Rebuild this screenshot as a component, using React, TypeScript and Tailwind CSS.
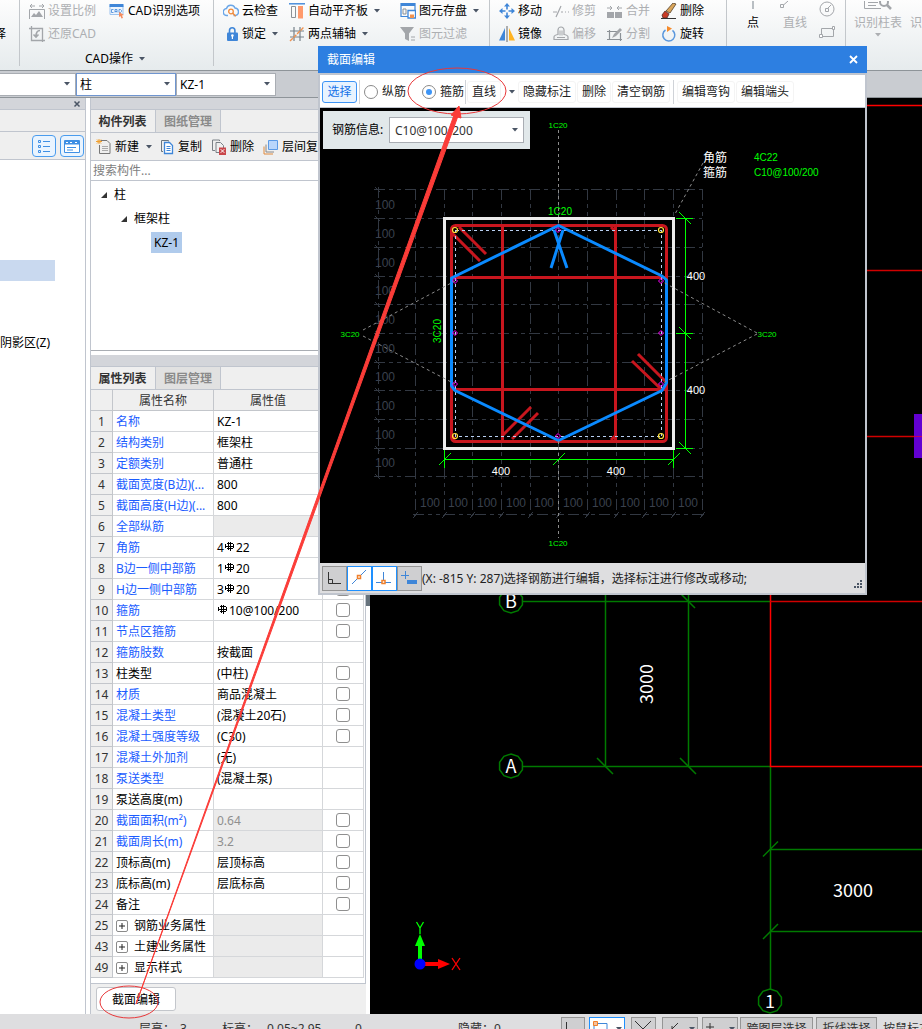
import { useState, type ReactNode } from 'react';

const GRAY = '#a3a6aa';
const BLUE = '#3f86d8';

const Icon = ({ children }: { children: ReactNode }) => (
  <svg width="16" height="16" viewBox="0 0 16 16" fill="none" className="shrink-0">{children}</svg>
);

const Caret = ({ className = 'text-gray-600' }: { className?: string }) => (
  <svg width="6" height="4" viewBox="0 0 6 4" className={`shrink-0 ${className}`}><path d="M0 0h6L3 3.500z" fill="currentColor" /></svg>
);

const icons = {
  scale: <Icon><path d="M1 3h5M3 1L1 3l2 2M15 3h-5M13 1l2 2-2 2M.5 6.500h15v10H.5z" stroke={GRAY} /><path d="M2 14l3-4 2 2 3-4 4 6z" fill={GRAY} /></Icon>,
  restore: <Icon><path d="M2.500 0v14.500H16M0 2.500h13.500V16" stroke={GRAY} strokeWidth="1.300" /><path d="M11 4.500c-3 0-4 2-4 6M4.500 8.500L7 11l2.500-2.500" stroke={GRAY} strokeWidth="1.600" /></Icon>,
  cadOptions: <Icon><path d="M1 2.500h13v9H1z" fill="#eef5fd" stroke="#9cc3ee" /><path d="M.5 1h14v3H.5z" fill={BLUE} /><path d="M4.500 6.500h-2v3h2M6 9.500v-3h2v3M6 8.500h2M10 6.500h1.500l1 1v1l-1 1H10z" stroke={BLUE} strokeWidth=".8" /><path d="M10 9l5 3-2 .5 1 2.500-1.500.5-1-2.500-1.500 1z" fill="#f58b5c" /></Icon>,
  cloud: <Icon><path d="M5 12.500H4a3.500 3.500 0 01-.5-7 4.500 4.500 0 018.500-.5 3.800 3.800 0 01.5 7.500h-2" stroke="#6aa6e8" strokeWidth="1.400" /><circle cx="8" cy="8.500" r="2.300" stroke="#f08b3c" strokeWidth="1.300" /><path d="M9.700 10.200l3 3" stroke="#f08b3c" strokeWidth="1.500" /></Icon>,
  lock: <Icon><path d="M6.500 7V4.500a2.700 2.700 0 015.400 0V7" stroke={BLUE} strokeWidth="1.600" /><rect x="4" y="6.500" width="11" height="8.500" rx="1" fill={BLUE} /><circle cx="9.400" cy="9.500" r="1.300" fill="#fff" /><path d="M9.400 10v3" stroke="#fff" strokeWidth="1.200" /></Icon>,
  align: <Icon><path d="M0 .8h16" stroke={BLUE} strokeWidth="1.400" /><path d="M2.500 3.500h4v11h-4z" stroke="#8b9196" /><path d="M9 3h5v12.500H9z" fill="#ff9a6c" /></Icon>,
  axis: <Icon><path d="M5 1v14M11 1v14M1 5h14M1 11h14" stroke="#76818a" strokeWidth="1.200" /><path d="M1 15L15 1" stroke="#f0924f" strokeWidth="1.400" strokeDasharray="4 1" /></Icon>,
  save: <Icon><path d="M1 .500h14v13H1z" stroke={BLUE} strokeWidth="1.200" /><path d="M1 0h14v3H1z" fill={BLUE} /><path d="M3 6h3v5H3z" stroke="#8b9196" /><path d="M8 7.500h7.500V15H8z" fill="#fff" stroke={BLUE} strokeWidth="1.300" /><path d="M10 11.500h4V15h-4z" fill="#f0924f" /></Icon>,
  filter: <Icon><path d="M0 1h14L9 7.500V15l-4-2V7.500z" fill="#a3a6aa" /><path d="M11 11h4M11 14h4" stroke={GRAY} /></Icon>,
  move: <Icon><path d="M8 0l3 3.500H5zM8 16l3-3.500H5zM0 8l3.500-3v6zM16 8l-3.500-3v6z" fill={BLUE} /><path d="M8 2v4.500M8 9.500V14M2 8h4.500M9.500 8H14" stroke={BLUE} strokeWidth="1.600" /></Icon>,
  mirror: <Icon><path d="M6 2v12.500H0z" fill="#3f86d8" /><path d="M10 2v12.500h6z" fill="#ffb321" /><path d="M8 0v16" stroke="#666" /></Icon>,
  trim: <Icon><path d="M0 9h4M8 9h2M12 9h1M15 9h1M3 14L8 3" stroke={GRAY} strokeWidth="1.200" /></Icon>,
  offset: <Icon><path d="M1 13.500h14V11c0-1-1-2-4-2.500V4a3 3 0 00-6 0v4.500C2 9 1 10 1 11z" stroke={GRAY} strokeWidth="1.200" /><path d="M4 11.500h8M7 4.500v5M9 4.500v5" stroke={GRAY} /></Icon>,
  merge: <Icon><path d="M0 9h7v6H0zM8 9h7v6H8z" fill="#a3a6aa" /><path d="M0 5h5M3 3l2 2-2 2M15 5h-5M12 3l-2 2 2 2" stroke={GRAY} /></Icon>,
  split: <Icon><path d="M0 5.500h11M2.500 4v10M0 13.500h15M13.500 7v8" stroke="#8b9196" strokeWidth="1.200" /><path d="M5 12l2-4 6-6 2 2-6 6z" fill="#a3a6aa" /></Icon>,
  erase: <Icon><path d="M12 0l3 1-6 9-4-2z" fill="#d9a55a" stroke="#54402a" strokeWidth=".8" /><path d="M4 8l4 3-2 4H2l-1-3z" fill="#c93c26" stroke="#54302a" strokeWidth=".8" /><path d="M0 15.500h15" stroke="#333" /></Icon>,
  rotate: <Icon><path d="M11.500 4.300A6 6 0 114.500 4" stroke="#5a97dd" strokeWidth="1.500" /><path d="M6 0l5 2.500L6 6z" fill="#f58b2c" /></Icon>,
  add: <Icon><path d="M4.500 1.500h6.500l3 3v10H3.500V6" stroke="#777" /><path d="M6 7.500h6M6 9.500h6M6 11.500h6" stroke="#aaa" /><path d="M1 .5l4 4M5 .5l-4 4M3 0v5M0 2.500h6" stroke="#f0a030" /></Icon>,
  copy: <Icon><path d="M9.500 2.500V1.500H2.500v11H4" stroke="#6b7680" /><path d="M5.500 3.500h5l3 3v8h-8z" fill="#fff" stroke={BLUE} strokeWidth="1.300" /><path d="M7.500 7.500h4M7.500 9.500h4M7.500 11.500h4" stroke={BLUE} /></Icon>,
  remove: <Icon><path d="M8.500 2V1H1.500v10.500H4M5 3.500h4.500l3 3V10M5 3.500v10h3" stroke="#7a8086" /><path d="M8 8.500h7V16H8z" fill="#c9474b" /><path d="M9.700 10.200l3.600 3.600M13.300 10.200l-3.600 3.600" stroke="#fff" /></Icon>,
  floors: <Icon><path d="M5.500 1.500h9v9h-9z" fill="#b9d6fb" stroke="#5b9ae6" /><path d="M3 5.500v7.500h8" stroke="#888" /><path d="M1 7.500V15h9" stroke="#e08a3c" /></Icon>,
};

type Cmd = { label: string; icon: ReactNode; off?: boolean; menu?: boolean };

const commandColumns: Record<string, { width: string; items: Cmd[] }[]> = {
  cad: [
    { width: 'w-20', items: [{ label: '设置比例', icon: icons.scale, off: true }, { label: '还原CAD', icon: icons.restore, off: true }] },
    { width: 'w-[104px]', items: [{ label: 'CAD识别选项', icon: icons.cadOptions }] },
  ],
  common: [
    { width: 'w-[66px]', items: [{ label: '云检查', icon: icons.cloud }, { label: '锁定', icon: icons.lock, menu: true }] },
    { width: 'w-[111px]', items: [{ label: '自动平齐板', icon: icons.align, menu: true }, { label: '两点辅轴', icon: icons.axis, menu: true }] },
    { width: 'w-[88px]', items: [{ label: '图元存盘', icon: icons.save, menu: true }, { label: '图元过滤', icon: icons.filter, off: true }] },
  ],
  edit: [
    { width: 'w-[54px]', items: [{ label: '移动', icon: icons.move }, { label: '镜像', icon: icons.mirror }] },
    { width: 'w-[54px]', items: [{ label: '修剪', icon: icons.trim, off: true }, { label: '偏移', icon: icons.offset, off: true }] },
    { width: 'w-[54px]', items: [{ label: '合并', icon: icons.merge, off: true }, { label: '分割', icon: icons.split, off: true }] },
    { width: 'w-16', items: [{ label: '删除', icon: icons.erase }, { label: '旋转', icon: icons.rotate }] },
  ],
};

function CommandGroup({ name }: { name: string }) {
  return (
    <div className="flex pt-px">
      {commandColumns[name].map((col, i) => (
        <div key={i} className={`flex shrink-0 flex-col gap-px ${col.width}`}>
          {col.items.map((c, row) => (
            <button key={c.label} disabled={c.off} className={`flex items-center gap-[3px] whitespace-nowrap ${row === 0 ? 'h-5' : 'h-6'} ${c.off ? 'text-[#adafb2]' : 'text-black'}`}>
              {c.icon}
              {c.label}
              {c.menu && <span className="pl-[3px]"><Caret /></span>}
            </button>
          ))}
        </div>
      ))}
    </div>
  );
}

const Divider = () => <div className="mb-1 w-px shrink-0 bg-[#c3c7cb]" />;

function Ribbon() {
  return (
    <header className="flex h-[71px] shrink-0 overflow-hidden border-b border-[#8e9499] bg-gradient-to-b from-[#fdfdfd] to-[#e6ebed]">
      <div className="flex w-[19px] shrink-0 pt-[22px]">
        <button className="flex h-6 w-1.5 items-center justify-end overflow-hidden whitespace-nowrap">选择</button>
      </div>
      <Divider />
      <div className="flex w-[193px] shrink-0 flex-col gap-px pl-[9px]">
        <CommandGroup name="cad" />
        <button className="flex h-6 items-center justify-center gap-1.5 pr-3">CAD操作 <Caret /></button>
      </div>
      <Divider />
      <div className="w-[275px] shrink-0 pl-[9px]"><CommandGroup name="common" /></div>
      <Divider />
      <div className="w-[236px] shrink-0 pl-[9px]"><CommandGroup name="edit" /></div>
      <Divider />
      <div className="flex w-[118px] shrink-0 pt-px">
        <button className="flex w-[52px] flex-col items-center">
          <svg width="16" height="12" className="shrink-0"><path d="M8 0v8" stroke="#76818a" /></svg>
          <span className="leading-5">点</span>
        </button>
        <button disabled className="flex w-8 flex-col items-center text-[#adafb2]">
          <svg width="32" height="12" className="shrink-0" fill="none"><path d="M1.500 3.500h3v3h-3zM4.500 4L9 0" stroke={GRAY} /></svg>
          <span className="leading-5">直线</span>
        </button>
        <div className="flex flex-col gap-2 pl-2">
          <button disabled aria-label="圆"><svg width="16" height="16" fill="none"><circle cx="8" cy="8" r="7" stroke={GRAY} /><path d="M6.500 7.500h3v3h-3zM9 7l3-3" stroke={GRAY} /></svg></button>
          <button disabled aria-label="矩形"><svg width="16" height="14" fill="none"><path d="M2.500 3.500h12v8h-12z" stroke={GRAY} /><path d="M.5 9.500h3v3h-3zM13.500 1.500h2v3h-2z" fill="#fff" stroke={GRAY} /></svg></button>
        </div>
      </div>
      <Divider />
      <div className="flex gap-2 pl-2 pt-px text-[#adafb2]">
        <button disabled className="flex shrink-0 flex-col items-center whitespace-nowrap">
          <svg width="32" height="12" className="shrink-0" fill="none"><path d="M2.500 0v7.500H19M6 1.500h10M6 4.500h8" stroke={GRAY} /><circle cx="22" cy="1" r="4" stroke={GRAY} strokeWidth="2" /><path d="M25 4l4 4" stroke={GRAY} strokeWidth="2.500" /></svg>
          <span className="leading-5">识别柱表</span>
          <Caret className="text-[#adafb2]" />
        </button>
        <button disabled className="flex shrink-0 flex-col whitespace-nowrap pt-3 leading-5">识别梁</button>
      </div>
    </header>
  );
}

function Combo({ label, value, className }: { label: string; value: string; className: string }) {
  return (
    <div className={`relative shrink-0 border bg-white ${className}`}>
      <select aria-label={label} className="h-full w-full appearance-none bg-transparent px-[3px] pt-px outline-none">
        <option>{value}</option>
      </select>
      <span className="pointer-events-none absolute inset-y-0 right-[5px] flex items-center"><Caret /></span>
    </div>
  );
}

function NavPanel() {
  return (
    <aside className="w-[86px] shrink-0 overflow-hidden border-r border-[#c0c5ce] bg-white">
      <div className="flex h-3 items-center justify-end border-b border-[#c0c5ce] bg-[#d3d5da] pr-1">
        <button aria-label="关闭"><svg width="8" height="8" className="text-gray-600"><path d="M1.500 1.500l5 5M6.500 1.500l-5 5" stroke="currentColor" strokeWidth="1.500" /></svg></button>
      </div>
      <div className="h-[22px] border-b border-[#c0c5ce] bg-[#efefef]" />
      <div className="flex h-7 items-center justify-end gap-1 border-b border-[#c0c5ce] bg-[#efefef] pr-px">
        <button aria-label="列表" className="flex h-[22px] w-6 items-center justify-center rounded border border-[#4a9cee] bg-[#e9f4ff]">
          <svg width="14" height="14" fill="none" stroke="#3f8fe4"><path d="M1.500 1.500h2v2h-2zM1.500 6.500h2v2h-2zM1.500 11.500h2v2h-2zM6 2.500h7M6 7.500h7M6 12.500h7" /></svg>
        </button>
        <button aria-label="面板" className="flex h-[22px] w-6 items-center justify-center rounded border border-[#4a9cee] bg-[#e9f4ff]">
          <svg width="16" height="14" fill="none" stroke="#3f8fe4"><path d="M.5 1.500h15v12H.5z" fill="#fff" /><path d="M1 3.500h14" strokeWidth="4" /><path d="M3 8.500h9M3 11h6" /><path d="M2 3.500h2M6 3.500h2M11 3.500h2" stroke="#fff" /></svg>
        </button>
      </div>
      <div className="pt-[100px]">
        <div className="h-[21px] w-[55px] bg-[#c9d9ef]" />
        <div className="mt-[52px] whitespace-nowrap leading-5">阴影区(Z)</div>
      </div>
    </aside>
  );
}

function Tabs({ items }: { items: [string, string] }) {
  return (
    <div className="flex h-[23px] shrink-0 border-b border-[#c0c5ce] bg-[#efefef]">
      <button className="w-[65px] border-r border-[#c0c5ce] pr-px pt-px font-bold text-[#333]">{items[0]}</button>
      <button className="w-[65px] border-r border-[#c0c5ce] bg-[#e1e1e1] pt-px font-bold text-[#8a8a8a]">{items[1]}</button>
    </div>
  );
}

const TreeArrow = () => <svg width="6" height="6" className="shrink-0"><path d="M6 0v6H0z" fill="#333" /></svg>;

function ComponentList() {
  return (
    <section className="shrink-0">
      <div className="h-3 border-b border-[#c0c5ce] bg-[#d3d5da]" />
      <Tabs items={['构件列表', '图纸管理']} />
      <div className="flex h-7 items-center overflow-hidden whitespace-nowrap border-b border-[#c0c5ce] bg-[#efefef] pl-[5px] pt-px">
        <button className="flex w-[63px] shrink-0 items-center gap-[3px]">{icons.add}新建<span className="pl-1"><Caret /></span></button>
        <button className="flex w-[52px] shrink-0 items-center gap-[3px]">{icons.copy}复制</button>
        <button className="flex w-[52px] shrink-0 items-center gap-[3px]">{icons.remove}删除</button>
        <button className="flex shrink-0 items-center gap-[3px]">{icons.floors}层间复制</button>
      </div>
      <input aria-label="搜索构件" placeholder="搜索构件..." className="block h-5 w-full border-b border-[#c0c5ce] bg-white px-0.5 outline-none placeholder:text-[#808080]" />
      <ul className="h-[170px] border-b border-[#a9adb3] bg-white pt-0.5">
        <li className="flex h-6 items-center gap-[7px] pl-2.5"><TreeArrow />柱</li>
        <li className="flex h-6 items-center gap-[7px] pl-[30px]"><TreeArrow />框架柱</li>
        <li className="flex h-[23px] items-center pl-[60px]"><span className="bg-[#b0cbec] px-[3px] leading-[21px]">KZ-1</span></li>
      </ul>
    </section>
  );
}

// HRB400 bar grade mark
const Grade = () => (
  <svg width="10" height="10" fill="none" stroke="#000" className="mx-px inline-block align-baseline" shapeRendering="crispEdges">
    <path d="M2 1.500h6M2 6.500h6M.5 2v4M8.500 2v4M0 4.500h9M3.500 0v8M5.500 0v9" strokeWidth="1" />
  </svg>
);

type Row = { no: number; name: string; value?: ReactNode; plain?: boolean; shaded?: boolean; check?: boolean; group?: boolean };

const rows: Row[] = [
  { no: 1, name: '名称', value: 'KZ-1' },
  { no: 2, name: '结构类别', value: '框架柱', check: true },
  { no: 3, name: '定额类别', value: '普通柱', check: true },
  { no: 4, name: '截面宽度(B边)(...', value: '800', check: true },
  { no: 5, name: '截面高度(H边)(...', value: '800', check: true },
  { no: 6, name: '全部纵筋', shaded: true, check: true },
  { no: 7, name: '角筋', value: <>4<Grade />22</>, check: true },
  { no: 8, name: 'B边一侧中部筋', value: <>1<Grade />20</>, check: true },
  { no: 9, name: 'H边一侧中部筋', value: <>3<Grade />20</>, check: true },
  { no: 10, name: '箍筋', value: <><Grade />10@100/200</>, check: true },
  { no: 11, name: '节点区箍筋', check: true },
  { no: 12, name: '箍筋肢数', value: '按截面' },
  { no: 13, name: '柱类型', value: '(中柱)', plain: true, check: true },
  { no: 14, name: '材质', value: '商品混凝土', check: true },
  { no: 15, name: '混凝土类型', value: '(混凝土20石)', check: true },
  { no: 16, name: '混凝土强度等级', value: '(C30)', check: true },
  { no: 17, name: '混凝土外加剂', value: '(无)' },
  { no: 18, name: '泵送类型', value: '(混凝土泵)' },
  { no: 19, name: '泵送高度(m)', plain: true },
  { no: 20, name: '截面面积(m²)', value: '0.64', shaded: true, check: true },
  { no: 21, name: '截面周长(m)', value: '3.2', shaded: true, check: true },
  { no: 22, name: '顶标高(m)', value: '层顶标高', plain: true, check: true },
  { no: 23, name: '底标高(m)', value: '层底标高', plain: true, check: true },
  { no: 24, name: '备注', plain: true, check: true },
  { no: 25, name: '钢筋业务属性', plain: true, shaded: true, group: true },
  { no: 43, name: '土建业务属性', plain: true, shaded: true, group: true },
  { no: 49, name: '显示样式', plain: true, shaded: true, group: true },
];

function PropertyList() {
  return (
    <section className="mt-1 flex min-h-0 flex-1 flex-col bg-[#efefef]">
      <div className="h-3 shrink-0 border-b border-[#c0c5ce] bg-[#d3d5da]" />
      <Tabs items={['属性列表', '图层管理']} />
      <div className="border-b border-r border-[#c0c5ce] bg-white pb-[5px]">
        <table className="w-[273px] table-fixed border-separate border-spacing-0 leading-[18px]">
          <colgroup><col className="w-[22px]" /><col className="w-[101px]" /><col className="w-[109px]" /><col className="w-[41px]" /></colgroup>
          <thead>
            <tr className="h-[21px] bg-[#efefef] text-[#333]">
              <th className="border-b border-r border-[#c3c6cb] p-0" />
              <th className="border-b border-r border-[#c3c6cb] p-0 pt-0.5 font-normal">属性名称</th>
              <th className="border-b border-r border-[#c3c6cb] p-0 pt-0.5 font-normal">属性值</th>
              <th className="border-b border-r border-[#c3c6cb] p-0" />
            </tr>
          </thead>
          <tbody>
            {rows.map(r => (
              <tr key={r.no} className="h-[21px]">
                <td className="border-b border-r border-[#c3c6cb] bg-[#efefef] p-0 pt-0.5 text-center text-[#333]">{r.no}</td>
                <td className={`whitespace-nowrap border-b border-r border-[#d5d7da] p-0 pl-[3px] pt-0.5 ${r.plain ? 'text-black' : 'text-[#1a5cff]'}`}>
                  {r.group ? (
                    <span className="flex items-center gap-1.5">
                      <button aria-label={`展开${r.name}`} className="flex size-3 items-center justify-center rounded-[2px] border border-[#8a8a8a] bg-white">
                        <svg width="6" height="6"><path d="M3 0v6M0 3h6" stroke="#222" /></svg>
                      </button>
                      {r.name}
                    </span>
                  ) : r.name}
                </td>
                <td className={`whitespace-nowrap border-b border-r border-[#d5d7da] p-0 pl-[3px] pt-0.5 ${r.shaded ? 'bg-[#ebebeb] text-[#8f8f8f]' : 'text-black'}`}>{r.value}</td>
                <td className="border-b border-r border-[#d5d7da] p-0">
                  {r.check && <input type="checkbox" aria-label={`附加 ${r.name}`} className="mx-auto block size-3.5 appearance-none rounded-[3px] border border-[#8f8f8f] bg-white checked:bg-blue-500" />}
                </td>
              </tr>
            ))}
          </tbody>
        </table>
      </div>
      <div className="pl-[5px] pt-[3px]">
        <button className="h-6 w-20 rounded-[3px] border border-[#c3c6cb] bg-white pt-px">截面编辑</button>
      </div>
    </section>
  );
}

const bubble = (cx: number, cy: number) =>
  Array.from({ length: 10 }, (_, i) => {
    const a = (i * Math.PI) / 5 - Math.PI / 2;
    return `${cx + 12 * Math.cos(a)},${cy + 12 * Math.sin(a)}`;
  }).join(' ');

function PlanView() {
  return (
    <main className="min-w-0 flex-1 overflow-hidden bg-black">
      <svg width="552" height="916" viewBox="370 98 552 916" fill="none" className="max-w-none">
        <g stroke="#007a00" strokeWidth="1.500">
          <path d="M523 601.500H770M523 766.500H770M605.500 560V766M688.500 560V766M770.500 766V990M770 849.500h152M770 931.500h152" />
          <path d="M597 758l16 16M680 758l16 16M681 594l14 14M763 856.500l15-15M763 939l15-15" />
          <polygon points={bubble(511, 601)} />
          <polygon points={bubble(511, 766)} />
          <polygon points={bubble(770, 1001)} />
        </g>
        <path d="M770.500 560V766.500H922" stroke="#f00" strokeWidth="1.500" />
        <path d="M770 601.500H922M860 436.500h62M860 270.500h62" stroke="#d00000" strokeWidth="1.500" />
        <path d="M860 105.500h62" stroke="#f00" strokeWidth="1.500" />
        <rect x="914" y="414" width="8" height="44" fill="#6200d2" />
        <path d="M914 436.500h8" stroke="#c00060" />
        <g fill="#fff" fontFamily="Noto Sans CJK SC, sans-serif" textAnchor="middle" fontSize="18">
          <text x="511" y="608">B</text>
          <text x="511" y="773">A</text>
          <text x="770" y="1008">1</text>
          <text x="853" y="897">3000</text>
          <text x="647" y="690" transform="rotate(-90 647 684)">3000</text>
        </g>
        <path d="M420 960v-18" stroke="#0f0" strokeWidth="4" />
        <path d="M415 946l5-12 5 12z" fill="#0f0" />
        <path d="M424 964h14" stroke="#f00" strokeWidth="4" />
        <path d="M438 959l12 5-12 5z" fill="#f00" />
        <circle cx="420" cy="964" r="5.500" fill="#00f" />
        <path d="M416.500 922l3.500 6 3.500-6M420 928v6" stroke="#0f0" strokeWidth="1.300" />
        <path d="M452 958l8 12M460 958l-8 12" stroke="#f00" strokeWidth="1.300" />
      </svg>
    </main>
  );
}

const gridX = [415, 444, 472, 501, 530, 558, 587, 616, 644, 673, 702];
const gridY = [189, 218, 247, 276, 304, 333, 362, 390, 419, 448, 476];
const sideBars = [[558, 230], [558, 436], [455, 281], [455, 333], [455, 384], [661, 281], [661, 333], [661, 384]];
const cornerBars = [[455, 230], [661, 230], [455, 436], [661, 436]];

function SectionDrawing() {
  return (
    <svg width="545" height="455" viewBox="320 108 545 455" fill="none" fontFamily="Liberation Sans, sans-serif" className="block max-w-none">
      <g stroke="#323842" shapeRendering="crispEdges">
        <g strokeDasharray="11 4 4 4 4 4">
          {gridX.map(x => <path key={x} d={`M${x + 0.5} 189V514`} />)}
          {gridY.map(y => <path key={y} d={`M374 ${y + 0.5}H702`} />)}
          <path d="M378.500 187V477M413 514.500H704" />
        </g>
        {gridX.map(x => <path key={x} d={`M${x - 2} 518l5-6`} />)}
        {gridY.map(y => <path key={y} d={`M375 ${y - 2}l5 5`} />)}
      </g>
      <g fill="#3a414d" fontSize="12" textAnchor="middle">
        {gridX.slice(1).map(x => <text key={x} x={x - 14} y="507">100</text>)}
        {gridY.slice(1).map(y => <text key={y} x="385" y={y - 9}>100</text>)}
      </g>

      <rect x="444.500" y="218.500" width="229" height="230" stroke="#ececec" strokeWidth="3" />
      <g stroke="#c8161e" strokeWidth="3">
        <rect x="451.500" y="225.500" width="215" height="216" rx="4" />
        <path d="M502.500 226V441M615.500 226V441M452 277.500H666M452 389.500H666" />
        <path d="M452 233l28 28M459 227l27 27M632 361l29 28M638 354l27 27M503 435l28-28M512 439l26-26" />
        <path d="M611 227l5 5M611 440l5-5M455 440l-3-4" />
      </g>
      <rect x="455.500" y="230.500" width="206" height="206" stroke="#b9d0f2" strokeDasharray="3 3" shapeRendering="crispEdges" />
      <g stroke="#0a8aff" strokeWidth="3" strokeLinejoin="round">
        <path d="M558.500 225.500L451.500 278V386L455 390.500L558.500 440.500L662 390.500L666.500 383V280L662 276Z" />
        <path d="M554 230l13 38M563 230l-12 38" />
      </g>
      {sideBars.map(([x, y]) => <path key={`${x},${y}`} d={`M${x} ${y - 2.5}l2.500 2.500-2.500 2.500-2.500-2.500z`} stroke="#f0f" />)}
      {cornerBars.map(([x, y]) => <circle key={`${x},${y}`} cx={x} cy={y} r="2.500" stroke="#ffe23c" strokeWidth="1.200" />)}

      <g stroke="#8c8c8c" strokeDasharray="3 3">
        <path d="M558.500 130V226M558.500 441V538" />
        <path d="M703 163L675 214M363 330l92-49M363 336l92 48M757 333l-96-52M757 334l-96 50" />
      </g>

      <g stroke="#0f0" shapeRendering="crispEdges">
        <path d="M685.500 218V448M676 218.500h17M676 333.500h17M676 448.500h17M444 459.500H673M444.500 450v18M673.500 450v18" />
        <path d="M679 212l12 12M679 327l12 12M679 442l12 12M439 465l12-12M553 465l12-12M668 465l12-12" />
      </g>

      <g fill="#fff" fontSize="11" textAnchor="middle">
        <text x="696" y="280">400</text>
        <text x="696" y="394">400</text>
        <text x="501" y="475">400</text>
        <text x="616" y="475">400</text>
      </g>
      <g fill="#fff" fontFamily="Noto Sans CJK SC, sans-serif" fontSize="12">
        <text x="703" y="162">角筋</text>
        <text x="703" y="177">箍筋</text>
      </g>
      <g fill="#0f0" fontSize="10">
        <text x="754" y="161">4C22</text>
        <text x="754" y="176">C10@100/200</text>
        <text x="560" y="215" textAnchor="middle">1C20</text>
        <text x="437" y="335" textAnchor="middle" transform="rotate(-90 437 331)">3C20</text>
      </g>
      <g fill="#0f0" fontSize="8" textAnchor="middle">
        <text x="558" y="128">1C20</text>
        <text x="558" y="546">1C20</text>
        <text x="350" y="337">3C20</text>
        <text x="767" y="337">3C20</text>
      </g>
    </svg>
  );
}

const toolButton = 'h-[22px] shrink-0 rounded-[3px] border border-[#f4f4f4] px-1';

function SectionEditor() {
  const [mode, setMode] = useState('stirrup');
  const radio = (value: string, label: string) => (
    <label className="flex shrink-0 items-center gap-1">
      <input
        type="radio"
        name="bar-mode"
        checked={mode === value}
        onChange={() => setMode(value)}
        className="size-3.5 appearance-none rounded-full border border-[#8a8a8a] bg-white bg-clip-content p-[3px] checked:bg-[#3d94f6]"
      />
      {label}
    </label>
  );

  return (
    <div role="dialog" aria-label="截面编辑" className="absolute left-[318px] top-[46px] flex w-[549px] flex-col">
      <div className="flex h-[27px] items-center justify-between bg-[#2d7fe1] px-[9px] text-white">
        <h2>截面编辑</h2>
        <button aria-label="关闭"><svg width="9" height="9"><path d="M1 1l7 7M8 1l-7 7" stroke="#fff" strokeWidth="1.800" /></svg></button>
      </div>
      <div className="border-2 border-[#c0c5ce]">
        <div className="flex h-[33px] items-center whitespace-nowrap border-b border-[#c0c5ce] bg-white pl-0.5 pt-px text-[#222]">
          <button className="h-[22px] w-[35px] shrink-0 rounded-[3px] border border-[#3d94f6] bg-[#e8f3ff] text-[#1874e8]">选择</button>
          <div className="mx-0.5 h-6 w-px shrink-0 bg-[#d0d3d8]" />
          <div className="flex items-center gap-4 pl-0.5">
            {radio('longitudinal', '纵筋')}
            {radio('stirrup', '箍筋')}
          </div>
          <div className="mx-px h-6 w-px shrink-0 bg-[#d0d3d8]" />
          <button className={toolButton}>直线</button>
          <button aria-label="更多线型" className="pl-2 pr-[3px]"><Caret /></button>
          <div className="flex gap-px">
            <button className={toolButton}>隐藏标注</button>
            <button className={toolButton}>删除</button>
            <button className={toolButton}>清空钢筋</button>
          </div>
          <div className="mx-[3px] h-6 w-px shrink-0 bg-[#d0d3d8]" />
          <div className="flex gap-px">
            <button className={toolButton}>编辑弯钩</button>
            <button className={toolButton}>编辑端头</button>
          </div>
        </div>
        <div className="relative bg-black">
          <SectionDrawing />
          <div className="absolute left-[3px] top-[3px] flex h-[38px] w-[207px] items-center justify-between bg-[#e1e8ea] pl-[9px] pr-1.5">
            <label htmlFor="bar-info">钢筋信息:</label>
            <div className="relative h-[26px] w-[135px] border border-[#a9adb3] bg-white">
              <select id="bar-info" className="h-full w-full appearance-none px-[5px] pt-px text-[#333] outline-none"><option>C10@100/200</option></select>
              <span className="pointer-events-none absolute inset-y-0 right-[5px] flex items-center"><Caret /></span>
            </div>
          </div>
        </div>
        <div className="flex h-[30px] items-center bg-[#dedee0] pl-0.5 text-[#222]">
          <button aria-label="正交" className="size-[25px] border border-[#959595] bg-[#cfcfd1]"><svg width="23" height="23" fill="none" stroke="#333"><path d="M5.500 5v11.500H18M5.500 12.500h4v4" /></svg></button>
          <button aria-label="中点" className="size-[25px] border border-[#1e90ff] bg-white"><svg width="23" height="23" fill="none"><path d="M4 17L18 3" stroke={BLUE} /><path d="M9.500 8.500h3v3h-3z" fill="#fff" stroke="#f0802c" strokeWidth="1.500" /></svg></button>
          <button aria-label="垂点" className="size-[25px] border border-[#1e90ff] bg-white"><svg width="23" height="23" fill="none"><path d="M10.500 5v10M3 15.500h15" stroke={BLUE} /><path d="M9 13.500h3v3H9z" fill="#fff" stroke="#f0802c" strokeWidth="1.500" /></svg></button>
          <button aria-label="动态输入" className="size-[25px] border border-[#959595] bg-[#cfcfd1]"><svg width="23" height="23"><path d="M3 8.500h8M7.500 4v8" stroke={BLUE} /><path d="M9 13h10v4H9z" fill="#3f86d8" /></svg></button>
          <p className="flex-1 whitespace-nowrap pt-px">(X: -815 Y: 287)选择钢筋进行编辑，选择标注进行修改或移动;</p>
          <svg width="9" height="9" className="mr-0.5 mt-3 shrink-0 text-gray-600"><path d="M6 0h2v2H6zM3 3h2v2H3zM6 3h2v2H6zM0 6h2v2H0zM3 6h2v2H3zM6 6h2v2H6z" fill="currentColor" /></svg>
        </div>
      </div>
    </div>
  );
}

function StatusBar() {
  const btn = 'flex h-6 shrink-0 items-center border border-[#959595] bg-[#cfcfd1]';
  return (
    <footer className="flex h-[15px] shrink-0 items-start overflow-hidden whitespace-nowrap bg-[#dedee0] pt-[3px] leading-6 text-[#333]">
      <span className="ml-[139px] w-[41px] shrink-0">层高：</span>
      <span className="w-[42px] shrink-0">3</span>
      <span className="w-[45px] shrink-0">标高：</span>
      <span className="w-[88px] shrink-0">0.05~2.95</span>
      <span className="w-[103px] shrink-0">0</span>
      <span className="w-[103px] shrink-0">隐藏：0</span>
      <div className="flex shrink-0 gap-1">
        <button aria-label="正交" className={`${btn} w-6`}><svg width="22" height="22" fill="none" stroke="#333"><path d="M4.500 4v12H17" /></svg></button>
        <button aria-label="捕捉" className="flex h-6 w-9 shrink-0 items-center gap-1.5 border border-[#1e90ff] bg-white">
          <svg width="20" height="22" fill="none"><path d="M4 5.500h13V18H4z" stroke={BLUE} /><path d="M3.500 3.500h4v4h-4z" fill="#f7c09a" stroke="#f0802c" /></svg><Caret />
        </button>
        <button aria-label="交点" className={`${btn} ml-0.5 w-[25px]`}><svg width="23" height="22" stroke="#333"><path d="M3 3l16 16M19 3L3 19" /></svg></button>
        <button aria-label="最近点" className={`${btn} ml-0.5 w-9 gap-1.5`}><svg width="20" height="22" stroke="#333" fill="none"><path d="M15 5L5 15M9 8v6" /></svg><Caret /></button>
        <button aria-label="十字" className={`${btn} w-9 gap-1.5`}><svg width="20" height="22" stroke="#333"><path d="M7 5v10M3 9h8" /></svg><Caret /></button>
      </div>
      <button className={`${btn} ml-0.5 w-[73px] justify-center`}>跨图层选择</button>
      <button className={`${btn} ml-[3px] w-[61px] justify-center`}>折线选择</button>
      <span className="ml-1.5">按鼠标左键指定第一个角点</span>
    </footer>
  );
}

// hand-drawn callouts running from the button up to the stirrup option
function Callouts() {
  return (
    <svg width="922" height="1029" fill="none" className="pointer-events-none absolute left-0 top-0" stroke="#e8383a">
      <ellipse cx="457" cy="91" rx="49" ry="23" />
      <ellipse cx="129" cy="1002" rx="29" ry="16" />
      <path d="M136 1004L454 115L458 116Z" fill="#fb3c38" stroke="#fb3c38" strokeWidth="1" />
      <path d="M459 106l2 12-10-3z" fill="#fb3c38" stroke="#fb3c38" />
    </svg>
  );
}

export default function App() {
  return (
    <div className="relative flex h-screen flex-col overflow-hidden bg-white font-['Noto_Sans','Noto_Sans_CJK_SC',sans-serif] text-[12px] text-black">
      <Ribbon />
      <div className="flex h-[27px] shrink-0 items-center border-b border-[#8e9499] bg-[#c9ccd1]">
        <Combo label="楼层" value="" className="h-[23px] w-[76px] border-l-0 border-[#a9adb3]" />
        <Combo label="构件类型" value="柱" className="h-[23px] w-[100px] border-[#6f95cf]" />
        <Combo label="构件" value="KZ-1" className="h-[23px] w-[100px] border-[#a9adb3]" />
      </div>
      <div className="flex min-h-0 flex-1">
        <NavPanel />
        <div className="ml-1 flex w-[276px] shrink-0 flex-col border-l border-[#c0c5ce]">
          <ComponentList />
          <PropertyList />
        </div>
        <div className="w-1 shrink-0 bg-white"><div className="h-[508px] bg-[#66727c]" /></div>
        <PlanView />
      </div>
      <StatusBar />
      <SectionEditor />
      <Callouts />
    </div>
  );
}
